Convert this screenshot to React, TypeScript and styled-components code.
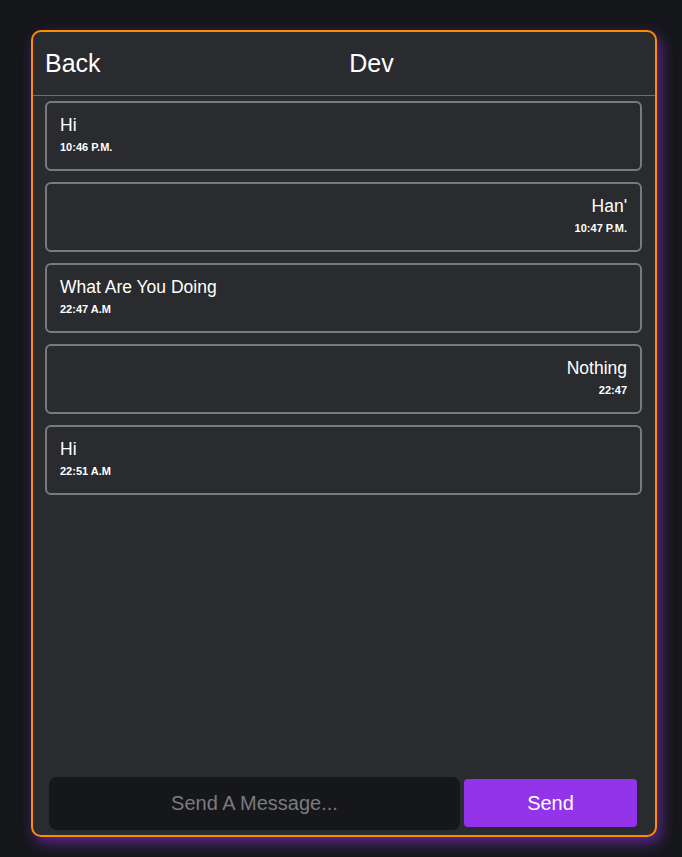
import React from "react";
import styled, { createGlobalStyle } from "styled-components";

const Global = createGlobalStyle`
  html, body { margin: 0; padding: 0; background: #16171b; }
  body { font-family: "Liberation Sans", Arial, sans-serif; }
`;

const Page = styled.div`
  width: 682px;
  height: 857px;
  padding: 30px 0 0 31px;
  box-sizing: border-box;
`;

const Card = styled.div`
  width: 626px;
  height: 807px;
  box-sizing: border-box;
  border: 2px solid #ff8c00;
  border-radius: 10px;
  background: #2a2b2f;
  box-shadow: 4px 6px 14px rgba(147, 51, 234, 0.55);
  display: flex;
  flex-direction: column;
  overflow: hidden;
`;

const Header = styled.div`
  height: 63px;
  flex: none;
  display: grid;
  grid-template-columns: 1fr auto 1fr;
  align-items: center;
  padding: 0 12px;
  border-bottom: 1px solid #6b6b6b;
  color: #ffffff;
  font-size: 25px;
`;

const Back = styled.span`
  justify-self: start;
`;

const Title = styled.span`
  justify-self: center;
  margin-left: 55px;
`;

const List = styled.div`
  flex: 1;
  display: flex;
  flex-direction: column;
  gap: 11px;
  padding: 5px 13px 0 12px;
`;

const Bubble = styled.div<{ $right?: boolean }>`
  height: 70px;
  box-sizing: border-box;
  border: 2px solid #7a7a7a;
  border-radius: 6px;
  padding: 11px 13px 0 13px;
  display: flex;
  flex-direction: column;
  align-items: ${(p) => (p.$right ? "flex-end" : "flex-start")};
  color: #ffffff;
`;

const Text = styled.div`
  font-size: 17.5px;
  line-height: 22px;
`;

const Time = styled.div`
  font-size: 11px;
  font-weight: bold;
  margin-top: 5px;
`;

const Footer = styled.div`
  flex: none;
  display: flex;
  align-items: flex-start;
  gap: 4px;
  padding: 0 17px 5px 16px;
`;

const Input = styled.div`
  width: 411px;
  height: 53px;
  background: #16171b;
  border-radius: 8px;
  display: flex;
  align-items: center;
  justify-content: center;
  color: #7b7b7e;
  font-size: 20px;
`;

const SendButton = styled.div`
  width: 173px;
  height: 48px;
  margin-top: 2px;
  background: #9333ea;
  border-radius: 4px;
  display: flex;
  align-items: center;
  justify-content: center;
  color: #ffffff;
  font-size: 20px;
`;

const messages = [
  { text: "Hi", time: "10:46 P.M.", right: false },
  { text: "Han'", time: "10:47 P.M.", right: true },
  { text: "What Are You Doing", time: "22:47 A.M", right: false },
  { text: "Nothing", time: "22:47", right: true },
  { text: "Hi", time: "22:51 A.M", right: false },
];

export default function App() {
  return (
    <Page>
      <Global />
      <Card>
        <Header>
          <Back>Back</Back>
          <Title>Dev</Title>
          <span />
        </Header>
        <List>
          {messages.map((m, i) => (
            <Bubble key={i} $right={m.right}>
              <Text>{m.text}</Text>
              <Time>{m.time}</Time>
            </Bubble>
          ))}
        </List>
        <Footer>
          <Input>Send A Message...</Input>
          <SendButton>Send</SendButton>
        </Footer>
      </Card>
    </Page>
  );
}
